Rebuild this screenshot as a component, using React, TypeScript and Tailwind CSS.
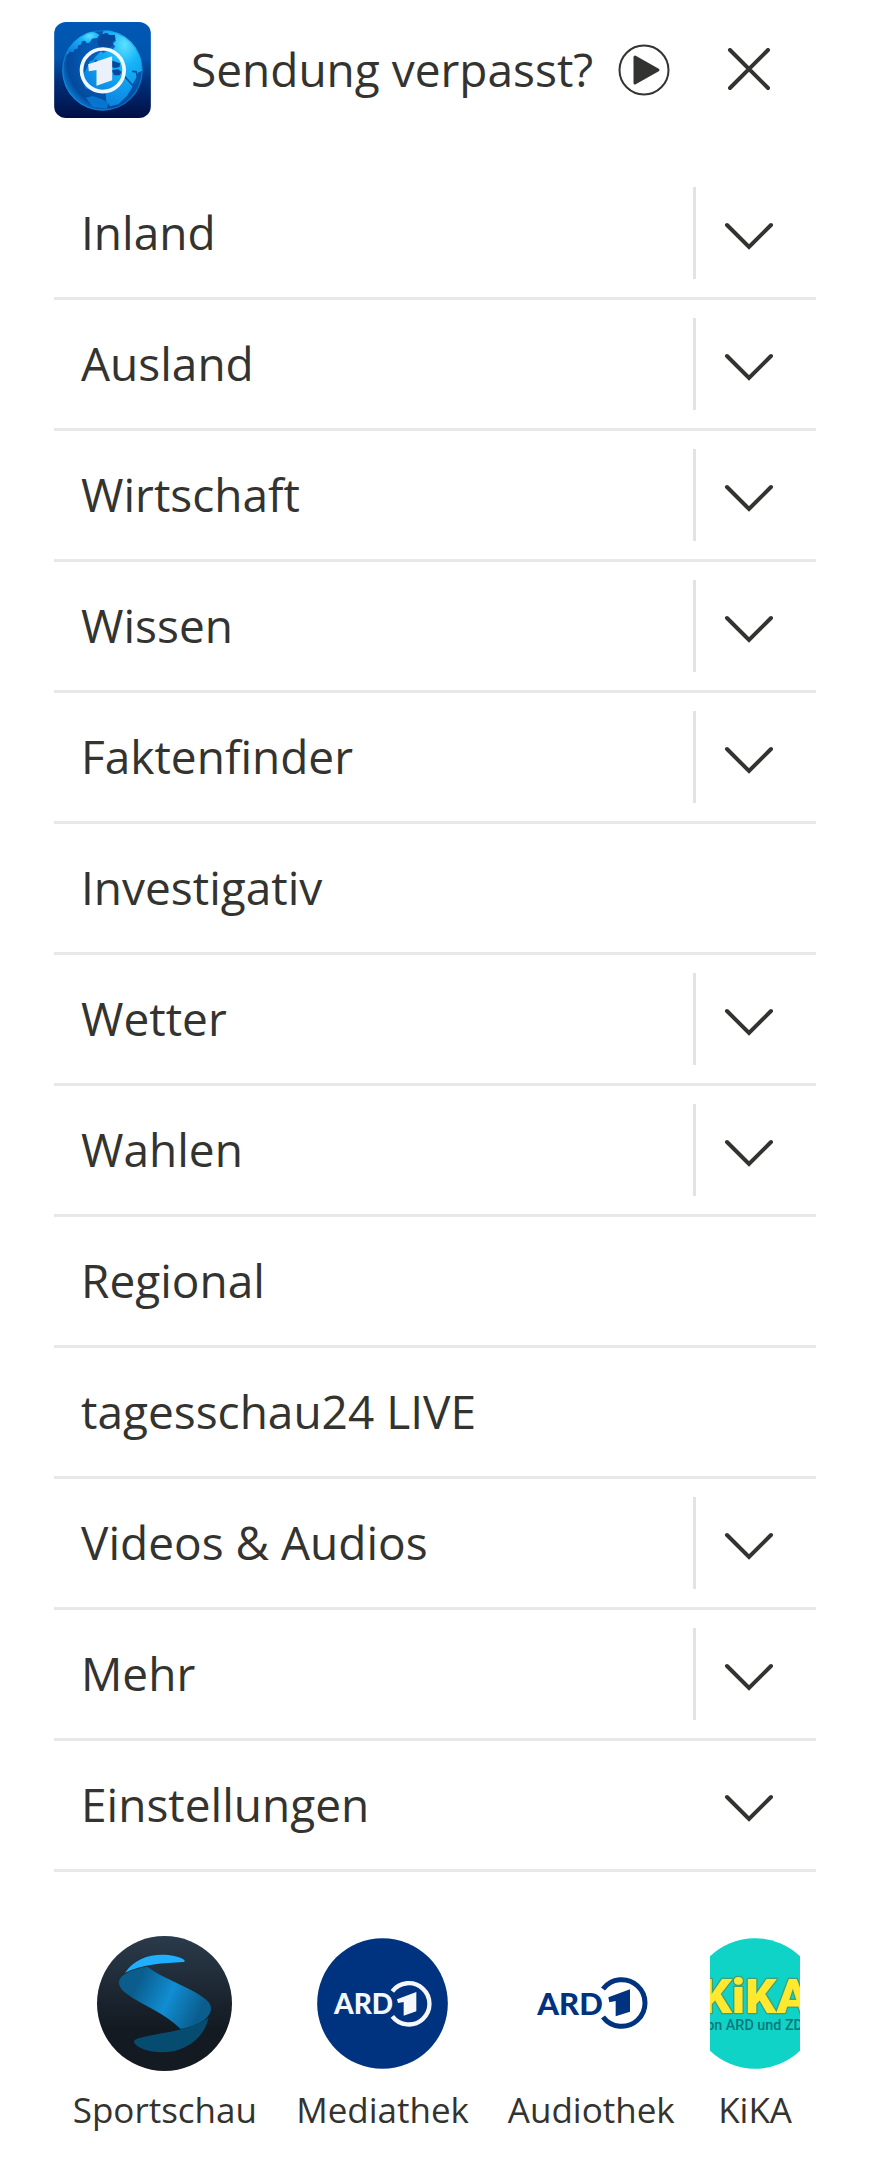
import { useState } from "react";

type Item = { label: string; expandable: boolean; divided: boolean };

const items: Item[] = [
  { label: "Inland", expandable: true, divided: true },
  { label: "Ausland", expandable: true, divided: true },
  { label: "Wirtschaft", expandable: true, divided: true },
  { label: "Wissen", expandable: true, divided: true },
  { label: "Faktenfinder", expandable: true, divided: true },
  { label: "Investigativ", expandable: false, divided: false },
  { label: "Wetter", expandable: true, divided: true },
  { label: "Wahlen", expandable: true, divided: true },
  { label: "Regional", expandable: false, divided: false },
  { label: "tagesschau24 LIVE", expandable: false, divided: false },
  { label: "Videos & Audios", expandable: true, divided: true },
  { label: "Mehr", expandable: true, divided: true },
  { label: "Einstellungen", expandable: true, divided: false },
];

function TagesschauLogo() {
  return (
    <svg viewBox="42 36 290 288" className="h-24 w-[97px] rounded-[12px]" aria-hidden="true">
      <defs>
        <linearGradient id="sky" x1="0" y1="0" x2="0" y2="1">
          <stop offset="0" stopColor="#0059b5" />
          <stop offset="0.38" stopColor="#0054ac" />
          <stop offset="0.62" stopColor="#00307a" />
          <stop offset="1" stopColor="#000f45" />
        </linearGradient>
        <radialGradient id="sea" cx="0.62" cy="0.4" r="0.65">
          <stop offset="0" stopColor="#0a6cc8" />
          <stop offset="0.55" stopColor="#0458b2" />
          <stop offset="0.85" stopColor="#034a9c" />
          <stop offset="1" stopColor="#0a78d0" />
        </radialGradient>
        <radialGradient id="land" cx="0.7" cy="0.2" r="0.9">
          <stop offset="0" stopColor="#5ce0ff" />
          <stop offset="0.3" stopColor="#16b4f8" />
          <stop offset="1" stopColor="#0a7cdc" />
        </radialGradient>
        <clipPath id="globe">
          <circle cx="187" cy="181" r="121" />
        </clipPath>
      </defs>
      <rect x="42" y="36" width="290" height="288" fill="url(#sky)" />
      <circle cx="187" cy="181" r="121" fill="url(#sea)" />
      <g clipPath="url(#globe)">
        <path
          fill="url(#land)"
          d="M76 133 L84 106 L96 88 L112 74 L132 67 L150 64 L168 68 L178 76 L170 84 L156 86 L148 98 L140 100 L134 92 L126 94 L122 104 L114 106 L112 116 L103 118 L99 127 L88 125 L84 133 Z"
        />
        <path
          fill="url(#land)"
          d="M186 74 L200 68 L210 76 L221 78 L227 92 L216 103 L226 109 L218 118 L203 110 L199 122 L190 130 L182 124 L173 133 L165 141 L159 151 L149 153 L143 169 L131 190 L129 216 L136 235 L158 241 L181 237 L197 252 L198 272 L210 289 L235 283 L260 258 L276 232 L288 216 L293 188 L306 182 L302 145 L282 102 L250 72 L214 58 L190 62 Z"
        />
        <path fill="#07489a" d="M178 76 L196 70 L206 76 L224 74 L226 88 L215 96 L221 104 L206 114 L192 119 L178 116 L172 98 Z M182 151 L205 148 L218 153 L240 160 L238 171 L222 174 L211 169 L197 180 L189 170 L177 176 L174 164 Z" />
        <path fill="#07489a" d="M214 181 L234 178 L244 186 L238 196 L222 196 Z M159 160 L167 148 L175 156 L168 170 Z" />
        <path fill="none" stroke="#05519f" strokeWidth="5" d="M252 198 L278 227 L292 202 L288 185 L276 184" />
        <path fill="#0a86e4" opacity="0.7" d="M137 263 L157 258 L184 267 L205 278 L200 296 L158 290 Z" />
      </g>
      <circle cx="187" cy="181" r="119" fill="none" stroke="#1c9aea" strokeOpacity="0.45" strokeWidth="4" />
      <circle cx="188" cy="181" r="64" fill="none" stroke="#f2f8ff" strokeWidth="11" />
      <path d="M144 163 L216 139 L216 211 L169 227 L169 180 L146 184 Z" fill="#eaf1fb" />
    </svg>
  );
}

function SportschauLogo() {
  return (
    <svg viewBox="171 108 405 405" className="size-[135px]" aria-hidden="true">
      <defs>
        <linearGradient id="night" x1="0" y1="0" x2="0" y2="1">
          <stop offset="0" stopColor="#2b3b4b" />
          <stop offset="0.68" stopColor="#131a22" />
          <stop offset="1" stopColor="#141a22" />
        </linearGradient>
        <linearGradient id="band" gradientUnits="userSpaceOnUse" x1="290" y1="250" x2="480" y2="340">
          <stop offset="0" stopColor="#0a5d8d" />
          <stop offset="0.5" stopColor="#118dd2" />
          <stop offset="1" stopColor="#0a5d8d" />
        </linearGradient>
      </defs>
      <circle cx="373.500" cy="310.500" r="202.500" fill="url(#night)" />
      <path fill="#20aeff" d="M255 218 C282 180 322 164 366 164 C392 164 417 169 432 179 C436 183 434 186 429 186 C370 190 310 191 255 218 Z" />
      <path fill="url(#band)" d="M322 200 C358 228 410 246 460 274 C490 291 513 306 513 325 C513 356 470 380 422 387 C372 338 310 318 262 283 C244 270 237 260 237 247 C239 223 276 208 322 200 Z" />
      <path fill="#064b70" d="M506 353 C492 415 436 457 366 457 C325 457 288 443 282 427 C281 419 290 416 302 413 C375 395 452 391 506 353 Z" />
    </svg>
  );
}

function MediathekLogo() {
  return (
    <svg viewBox="830 113 393 393" className="size-[131px]" aria-hidden="true">
      <circle cx="1026.500" cy="309.500" r="196" fill="#00337f" />
      <text x="881" y="342" fontFamily="Lato, sans-serif" fontWeight="900" fontSize="84" fill="#f4f7fc">
        ARD
      </text>
      <path d="M1056 273 A62 62 0 1 1 1056 348" fill="none" stroke="#f4f7fc" strokeWidth="13" />
      <path d="M1070 297 L1128 275 L1128 333 L1090 346 L1090 305 L1073 308 Z" fill="#f4f7fc" />
    </svg>
  );
}

function AudiothekLogo() {
  return (
    <svg viewBox="196 113 393 393" className="size-[131px]" aria-hidden="true">
      <text x="230" y="343" fontFamily="Lato, sans-serif" fontWeight="900" fontSize="93" fill="#00337f">
        ARD
      </text>
      <path d="M427 266 A70 70 0 1 1 427 350" fill="none" stroke="#00337f" strokeWidth="15" />
      <path d="M443 291 L508 267 L508 334 L465 348 L465 302 L446 306 Z" fill="#00337f" />
    </svg>
  );
}

function KikaLogo() {
  return (
    <svg viewBox="750 113 270 393" className="h-[131px] w-[90px]" aria-hidden="true">
      <circle cx="885" cy="309.500" r="196" fill="#0fd3c6" />
      <text
        x="722"
        y="338"
        fontFamily="Roboto, sans-serif"
        fontWeight="900"
        fontSize="146"
        fill="#ffe92e"
        stroke="#3f9f78"
        strokeWidth="8"
        strokeLinejoin="round"
        paintOrder="stroke"
      >
        KiKA
      </text>
      <text x="885" y="390" textAnchor="middle" fontFamily="'Liberation Sans Narrow', Roboto, sans-serif" fontSize="43" fontWeight="500" fill="#07777a">
        von ARD und ZDF
      </text>
    </svg>
  );
}

const apps = [
  { label: "Sportschau", Logo: SportschauLogo },
  { label: "Mediathek", Logo: MediathekLogo },
  { label: "Audiothek", Logo: AudiothekLogo },
  { label: "KiKA", Logo: KikaLogo },
];

function Row({ item }: { item: Item }) {
  const [open, setOpen] = useState(false);
  return (
    <li className="flex items-center border-b-3 border-[#e8e8e8]">
      <a href="#" className="flex h-32 flex-1 items-center pb-[2px] pl-[27px] text-[46px] leading-none">
        {item.label}
      </a>
      {item.expandable && (
        <button
          type="button"
          aria-label={`${item.label} aufklappen`}
          aria-expanded={open}
          onClick={() => setOpen(!open)}
          className={
            "flex h-[92px] w-[123px] items-center justify-center border-l-3 pt-[6px] pr-[15px] " +
            (item.divided ? "border-[#e3e3e3]" : "border-transparent")
          }
        >
          <svg viewBox="0 0 50 30" className="h-[30px] w-[50px]" fill="none" stroke="#333330" strokeWidth="4" strokeLinecap="round" aria-hidden="true">
            <path d="M3 4 L25 26 L47 4" />
          </svg>
        </button>
      )}
    </li>
  );
}

export default function App() {
  return (
    <div className="min-h-screen bg-white px-[54px] pt-[22px] font-['Open_Sans','Noto_Sans',sans-serif] font-medium text-[#333330]">
      <header className="flex items-center justify-between pr-[45px]">
        <a href="#" aria-label="tagesschau">
          <TagesschauLogo />
        </a>
        <a href="#" className="ml-10 flex flex-1 items-center justify-between text-[46px] leading-none whitespace-nowrap">
          <span className="pb-[2px]">Sendung verpasst?</span>
          <svg viewBox="0 0 52 52" className="size-[52px]" aria-hidden="true">
            <circle cx="26" cy="26" r="24.500" fill="none" stroke="#333330" strokeWidth="2" />
            <path d="M17 13 L40 26 L17 39 Z" fill="#333330" stroke="#333330" strokeWidth="3" strokeLinejoin="round" />
          </svg>
        </a>
        <button type="button" aria-label="Menü schließen" className="ml-[57px]">
          <svg viewBox="0 0 44 44" className="size-11" fill="none" stroke="#333330" strokeWidth="4" strokeLinecap="round" aria-hidden="true">
            <path d="M3 2 L41 40 M41 2 L3 40" />
          </svg>
        </button>
      </header>

      <nav className="mt-[51px]" aria-label="Hauptmenü">
        <ul>
          {items.map((item) => (
            <Row key={item.label} item={item} />
          ))}
        </ul>
      </nav>

      <ul className="grid grid-cols-[202fr_198fr_184fr_108fr] gap-[18px] pt-16 pr-[7px] pb-8 pl-[10px]">
        {apps.map(({ label, Logo }) => (
          <li key={label}>
            <a href="#" className="flex flex-col items-center">
              <span className="flex h-[135px] items-center">
                <Logo />
              </span>
              <span className="mt-[18px] text-[35px] leading-[42px]">{label}</span>
            </a>
          </li>
        ))}
      </ul>
    </div>
  );
}
